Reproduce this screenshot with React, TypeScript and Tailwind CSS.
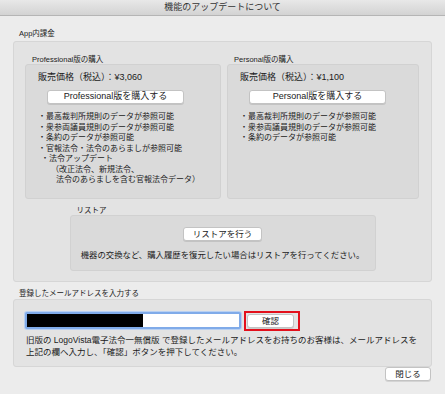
const font = "font-['Liberation_Sans','Noto_Sans_CJK_JP',sans-serif]";

function MacButton({ label, className }: { label: string; className: string }) {
  return (
    <div
      className={`flex h-[14px] items-center justify-center rounded-[3px] border border-[#c3c3c3] bg-white text-[#1a1a1a] shadow-[0_1px_0_rgba(0,0,0,0.10)] ${className}`}
    >
      {label}
    </div>
  );
}

function PurchaseBox({
  title,
  price,
  button,
  width,
  items,
}: {
  title: string;
  price: string;
  button: string;
  width: string;
  items: { text: string; indent: string }[];
}) {
  return (
    <div className={`flex flex-col ${width}`}>
      <div className="h-[9px] pl-[7px] text-[7.5px] leading-[10px] text-[#222]">{title}</div>
      <div className="h-[135px] rounded-[3px] border border-[#d1d1d1] bg-[#dadada] pl-[12px] pt-[6px]">
        <div className="text-[9px] leading-[12px] text-[#1a1a1a]">{price}</div>
        <MacButton label={button} className="ml-[9px] mt-[7px] w-[137px] text-[9px]" />
        <ul className="mt-[8px] text-[8px] leading-[10.5px] text-[#222]">
          {items.map((it) => (
            <li key={it.text} className={`whitespace-nowrap ${it.indent}`}>
              {it.text}
            </li>
          ))}
        </ul>
      </div>
    </div>
  );
}

export default function App() {
  return (
    <div className={`flex h-[394px] w-[445px] flex-col overflow-hidden bg-[#ececec] text-[#222] ${font}`}>
      {/* title bar */}
      <div className="flex h-[16px] shrink-0 items-center justify-center border-b border-[#b5b5b5] bg-linear-to-b from-[#e8e8e8] to-[#d3d3d3] text-[9px] leading-none text-[#333]">
        機能のアップデートについて
      </div>

      <div className="flex flex-col px-[13px] pt-[13px]">
        <div className="mb-[2px] h-[10px] pl-[6px] text-[7.5px] leading-[10px]">App内課金</div>

        {/* in-app purchase group */}
        <div className="flex h-[241px] flex-col rounded-[3px] border border-[#d6d6d6] bg-[#e3e3e3]">
          <div className="flex gap-[6px] pl-[11px] pt-[13px]">
            <PurchaseBox
              title="Professional版の購入"
              price="販売価格（税込）：¥3,060"
              button="Professional版を購入する"
              width="w-[196px]"
              items={[
                { text: "・最高裁判所規則のデータが参照可能", indent: "" },
                { text: "・衆参両議員規則のデータが参照可能", indent: "" },
                { text: "・条約のデータが参照可能", indent: "" },
                { text: "・官報法令・法令のあらましが参照可能", indent: "" },
                { text: "・法令アップデート", indent: "ml-[3px]" },
                { text: "（改正法令、新規法令、", indent: "ml-[13px]" },
                { text: "法令のあらましを含む官報法令データ）", indent: "ml-[18px]" },
              ]}
            />
            <PurchaseBox
              title="Personal版の購入"
              price="販売価格（税込）：¥1,100"
              button="Personal版を購入する"
              width="w-[192px]"
              items={[
                { text: "・最高裁判所規則のデータが参照可能", indent: "" },
                { text: "・衆参両議員規則のデータが参照可能", indent: "" },
                { text: "・条約のデータが参照可能", indent: "" },
              ]}
            />
          </div>

          {/* restore */}
          <div className="mx-auto mt-[7px] flex w-[306px] flex-col">
            <div className="h-[9px] pl-[7px] text-[7.5px] leading-[10px]">リストア</div>
            <div className="flex h-[56px] flex-col items-center rounded-[3px] border border-[#d1d1d1] bg-[#dadada] pt-[11px]">
              <MacButton label="リストアを行う" className="w-[79px] text-[8.5px]" />
              <div className="mt-[8px] whitespace-nowrap text-[8.4px] leading-[12px] text-[#1a1a1a]">
                機器の交換など、購入履歴を復元したい場合はリストアを行ってください。
              </div>
            </div>
          </div>
        </div>

        {/* email */}
        <div className="mt-[7px] h-[10px] pl-[6px] text-[7.5px] leading-[10px]">登録したメールアドレスを入力する</div>
        <div className="h-[68px] rounded-[3px] border border-[#d6d6d6] bg-[#e3e3e3] pl-[11px] pt-[12px]">
          <div className="flex items-start gap-[3px]">
            <div className="flex h-[17px] w-[216px] rounded-[2px] border-2 border-[#80abe9] bg-white shadow-[0_0_0_1px_#b8d0f2]">
              <div className="h-full w-[116px] bg-black" />
            </div>
            <div className="-mt-[1px] border-2 border-[#e3101c] py-[1px] pl-[1px] pr-[4px]">
              <MacButton label="確認" className="w-[47px] text-[8.5px]" />
            </div>
          </div>
          <div className="mt-[4px] pl-[1px] text-[8.5px] leading-[11.5px] text-[#1a1a1a]">
            <div className="whitespace-nowrap">
              旧版の LogoVista電子法令一無償版 で登録したメールアドレスをお持ちのお客様は、メールアドレスを
            </div>
            <div className="whitespace-nowrap">上記の欄へ入力し、「確認」ボタンを押下してください。</div>
          </div>
        </div>

        <div className="flex justify-end pr-[1px]">
          <MacButton label="閉じる" className="w-[46px] text-[8.5px]" />
        </div>
      </div>
    </div>
  );
}
